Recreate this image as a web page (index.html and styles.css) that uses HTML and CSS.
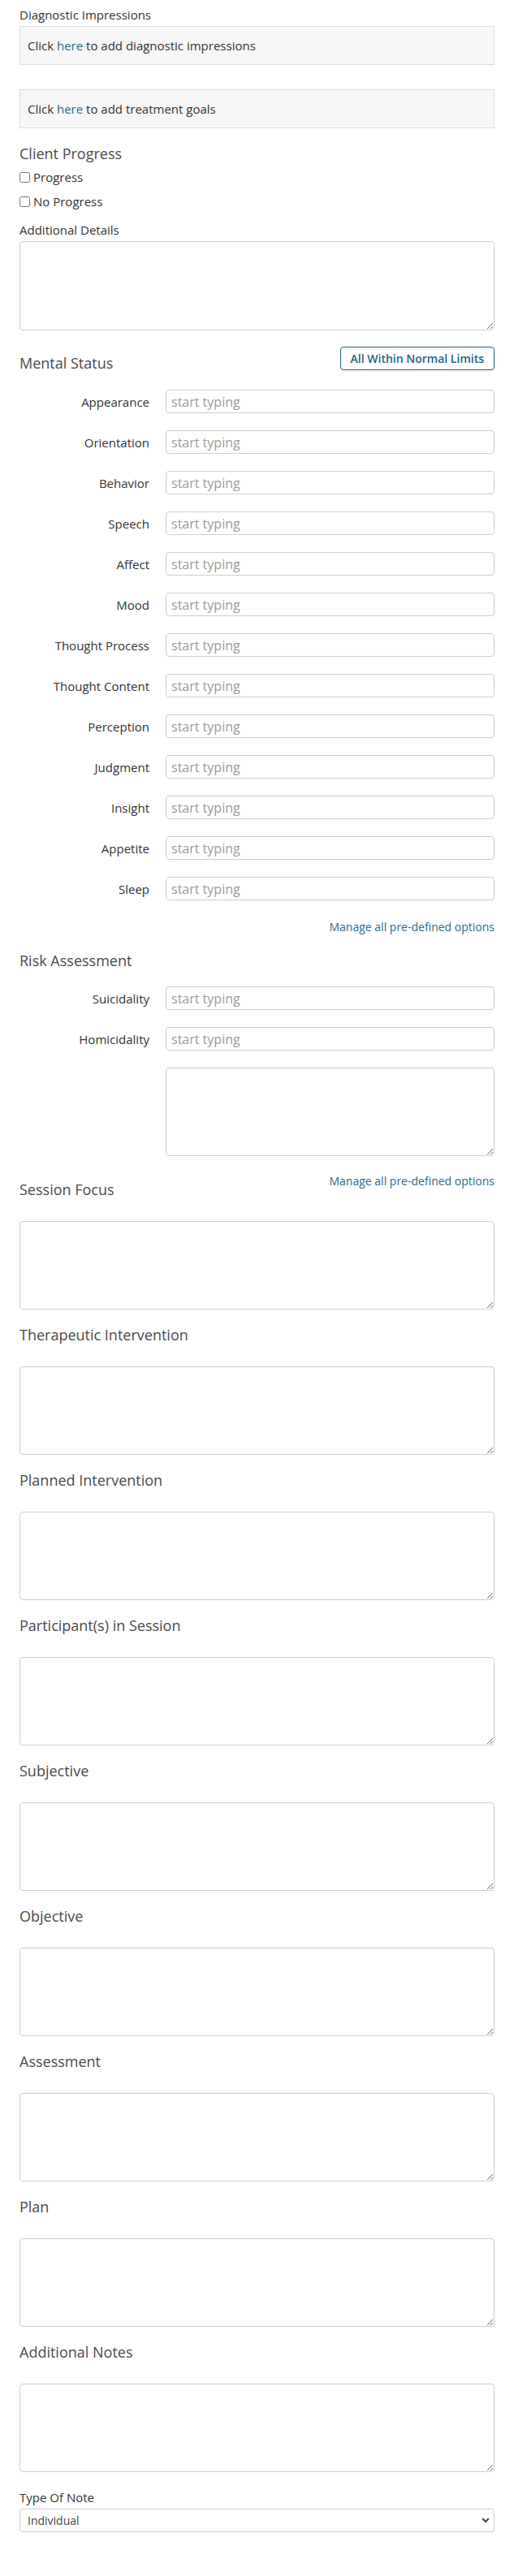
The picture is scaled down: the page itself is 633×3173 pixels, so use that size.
FILE: index.html
```html
<!DOCTYPE html>
<html lang="en">
<head>
<meta charset="utf-8">
<title>Progress Note</title>
<link rel="stylesheet" href="styles.css">
</head>
<body>
<div class="page">
  <div class="field-label">Diagnostic Impressions</div>
  <div class="info-box first">Click&nbsp;<a class="link" href="#">here</a>&nbsp;to add diagnostic impressions</div>
  <div class="info-box">Click&nbsp;<a class="link" href="#">here</a>&nbsp;to add treatment goals</div>

  <h3 class="section-title">Client Progress</h3>
  <div class="checks">
    <label class="check"><input type="checkbox"><span>Progress</span></label>
    <label class="check"><input type="checkbox"><span>No Progress</span></label>
  </div>
  <div class="field-label details-label">Additional Details</div>
  <textarea class="area tall"></textarea>

  <div class="head-row ms-row">
    <h3 class="section-title inline">Mental Status</h3>
    <button class="wnl-btn" type="button">All Within Normal Limits</button>
  </div>
  <div class="form-grid ms-grid">
    <label class="row-label">Appearance</label><input class="text-input" placeholder="start typing">
    <label class="row-label">Orientation</label><input class="text-input" placeholder="start typing">
    <label class="row-label">Behavior</label><input class="text-input" placeholder="start typing">
    <label class="row-label">Speech</label><input class="text-input" placeholder="start typing">
    <label class="row-label">Affect</label><input class="text-input" placeholder="start typing">
    <label class="row-label">Mood</label><input class="text-input" placeholder="start typing">
    <label class="row-label">Thought Process</label><input class="text-input" placeholder="start typing">
    <label class="row-label">Thought Content</label><input class="text-input" placeholder="start typing">
    <label class="row-label">Perception</label><input class="text-input" placeholder="start typing">
    <label class="row-label">Judgment</label><input class="text-input" placeholder="start typing">
    <label class="row-label">Insight</label><input class="text-input" placeholder="start typing">
    <label class="row-label">Appetite</label><input class="text-input" placeholder="start typing">
    <label class="row-label">Sleep</label><input class="text-input" placeholder="start typing">
  </div>
  <div class="manage-line"><a class="manage" href="#">Manage all pre-defined options</a></div>

  <h3 class="section-title">Risk Assessment</h3>
  <div class="form-grid risk-grid">
    <label class="row-label">Suicidality</label><input class="text-input" placeholder="start typing">
    <label class="row-label">Homicidality</label><input class="text-input" placeholder="start typing">
    <span class="row-label"></span><textarea class="area"></textarea>
  </div>

  <div class="head-row focus-row">
    <h3 class="section-title inline">Session Focus</h3>
    <a class="manage" href="#">Manage all pre-defined options</a>
  </div>
  <textarea class="area section-area"></textarea>

  <h3 class="section-title">Therapeutic Intervention</h3>
  <textarea class="area section-area"></textarea>

  <h3 class="section-title">Planned Intervention</h3>
  <textarea class="area section-area"></textarea>

  <h3 class="section-title">Participant(s) in Session</h3>
  <textarea class="area section-area"></textarea>

  <h3 class="section-title">Subjective</h3>
  <textarea class="area section-area"></textarea>

  <h3 class="section-title">Objective</h3>
  <textarea class="area section-area"></textarea>

  <h3 class="section-title">Assessment</h3>
  <textarea class="area section-area"></textarea>

  <h3 class="section-title">Plan</h3>
  <textarea class="area section-area"></textarea>

  <h3 class="section-title">Additional Notes</h3>
  <textarea class="area section-area"></textarea>

  <div class="field-label type-label">Type Of Note</div>
  <div class="select-wrap">
    <select class="select">
      <option>Individual</option>
      <option>Group</option>
      <option>Family</option>
    </select>
    <svg class="chev" width="10" height="7" viewBox="0 0 10 7" aria-hidden="true"><path d="M1.2 1.3 L5 5 L8.8 1.3" fill="none" stroke="#444" stroke-width="2"/></svg>
  </div>
</div>
</body>
</html>
```
FILE: styles.css
```css
html, body {
  margin: 0;
  padding: 0;
  background: #fff;
}
body {
  font-family: "Open Sans", "Liberation Sans", sans-serif;
  color: #333;
}
.page {
  padding: 8px 24px 0;
}
.field-label {
  font-size: 15px;
  line-height: 20px;
  margin: 0 0 4px;
  color: #333;
}
.info-box {
  height: 48px;
  box-sizing: border-box;
  border: 1px solid #dcdcdc;
  background: #f7f7f7;
  padding: 0 9px;
  display: flex;
  align-items: center;
  font-size: 15px;
  color: #333;
}
.info-box.first {
  margin-bottom: 30px;
}
.link, .manage {
  color: #2a6b8a;
  text-decoration: none;
}
.section-title {
  font-size: 18px;
  line-height: 24px;
  font-weight: 400;
  color: #4a4a4a;
  margin: 19px 0 0;
}
.section-title.inline {
  margin: 0;
  padding-top: 8px;
}
.checks {
  margin-top: 2px;
}
.check {
  height: 30px;
  display: flex;
  align-items: center;
  font-size: 15px;
  color: #333;
}
.check input {
  width: 13px;
  height: 13px;
  margin: 0 4px 0 0;
}
.details-label {
  margin-top: 10px;
}
.area {
  display: block;
  width: 100%;
  box-sizing: border-box;
  height: 109px;
  border: 1px solid #cfcfcf;
  border-radius: 4px;
  font-family: inherit;
  font-size: 15px;
  padding: 6px;
  margin: 0;
}
.area.tall {
  height: 110px;
}
.head-row {
  display: flex;
  justify-content: space-between;
  align-items: flex-start;
}
.ms-row {
  margin-top: 20px;
}
.wnl-btn {
  height: 29px;
  box-sizing: border-box;
  padding: 0 12px;
  border: 1px solid #1f6281;
  border-radius: 4px;
  background: #fff;
  color: #1f6281;
  font-family: inherit;
  font-size: 14px;
  font-weight: 600;
  cursor: pointer;
}
.form-grid {
  display: grid;
  grid-template-columns: 160px 1fr;
  column-gap: 20px;
  row-gap: 21px;
  align-items: center;
}
.ms-grid {
  margin-top: 21px;
}
.risk-grid {
  margin-top: 20px;
}
.row-label {
  text-align: right;
  font-size: 15px;
  line-height: 20px;
  color: #333;
}
.text-input {
  height: 29px;
  box-sizing: border-box;
  border: 1px solid #cfcfcf;
  border-radius: 4px;
  padding: 0 6px;
  font-family: inherit;
  font-size: 16px;
  color: #333;
  width: 100%;
  margin: 0;
}
.text-input::placeholder {
  color: #9a9a9a;
}
.manage-line {
  margin-top: 21px;
  text-align: right;
}
.manage {
  font-size: 14px;
  line-height: 20px;
}
.focus-row {
  margin-top: 21px;
}
.section-area {
  margin-top: 27px;
}
.type-label {
  margin-top: 21px;
}
.select-wrap {
  position: relative;
}
.select {
  display: block;
  width: 100%;
  height: 29px;
  box-sizing: border-box;
  border: 1px solid #cfcfcf;
  border-radius: 4px;
  padding: 0 9px;
  background: #fff;
  font-family: inherit;
  font-size: 14px;
  color: #444;
  appearance: none;
  -webkit-appearance: none;
  margin: 0;
}
.chev {
  position: absolute;
  right: 6px;
  top: 11px;
  pointer-events: none;
}
```
